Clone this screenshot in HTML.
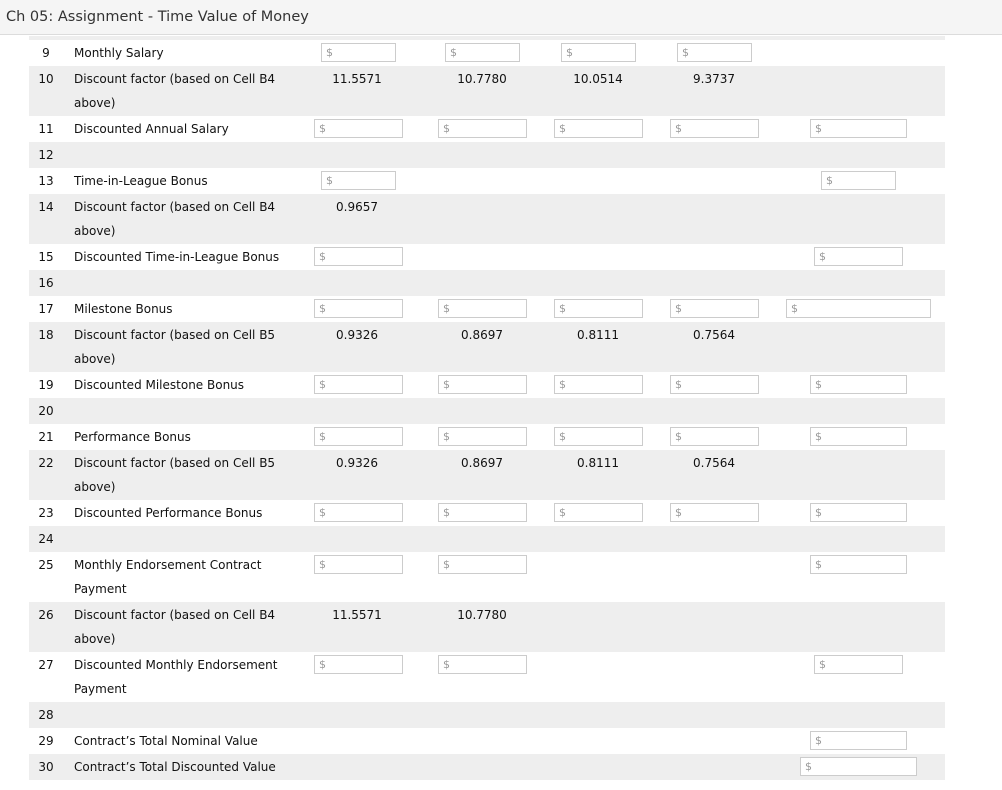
<!DOCTYPE html>
<html><head><meta charset="utf-8"><style>
body{margin:0;width:1002px;height:790px;background:#fff;position:relative;overflow:hidden;font-family:"DejaVu Sans","Liberation Sans",sans-serif;font-size:12px;color:#111}
.hd{position:absolute;left:0;top:0;width:1002px;height:35px;background:#f5f5f5;border-bottom:1px solid #dcdcdc;font-family:"DejaVu Sans",sans-serif;font-size:14.5px;color:#333;line-height:35px;padding-left:6px;box-sizing:border-box}
.g{position:absolute;left:29px;width:916px;background:#eeeeee}
.t{position:absolute;line-height:24px;white-space:nowrap;margin-top:1px}
.n{position:absolute;width:34px;left:29px;text-align:center;line-height:24px;margin-top:1px}
.v{position:absolute;width:100px;text-align:center;line-height:24px;margin-top:1px}
.i{position:absolute;height:19px;border:1px solid #ccc;box-sizing:border-box;background:#fff;font-size:11px;color:#999;line-height:17px;padding-left:4px}
</style></head><body>
<div class="hd">Ch 05: Assignment - Time Value of Money</div>
<div class="g" style="top:36px;height:4px"></div>
<div class="g" style="top:66px;height:50px"></div>
<div class="g" style="top:142px;height:26px"></div>
<div class="g" style="top:194px;height:50px"></div>
<div class="g" style="top:270px;height:26px"></div>
<div class="g" style="top:322px;height:50px"></div>
<div class="g" style="top:398px;height:26px"></div>
<div class="g" style="top:450px;height:50px"></div>
<div class="g" style="top:526px;height:26px"></div>
<div class="g" style="top:602px;height:50px"></div>
<div class="g" style="top:702px;height:26px"></div>
<div class="g" style="top:754px;height:26px"></div>

<div class="n" style="top:40px">9</div><div class="t" style="left:74px;top:40px">Monthly Salary</div>
<div class="i" style="left:321px;top:43px;width:75px">$</div><div class="i" style="left:445px;top:43px;width:75px">$</div><div class="i" style="left:561px;top:43px;width:75px">$</div><div class="i" style="left:677px;top:43px;width:75px">$</div>

<div class="n" style="top:66px">10</div><div class="t" style="left:74px;top:66px">Discount factor (based on Cell B4<br>above)</div>
<div class="v" style="left:307px;top:66px">11.5571</div><div class="v" style="left:432px;top:66px">10.7780</div><div class="v" style="left:548px;top:66px">10.0514</div><div class="v" style="left:664px;top:66px">9.3737</div>

<div class="n" style="top:116px">11</div><div class="t" style="left:74px;top:116px">Discounted Annual Salary</div>
<div class="i" style="left:314px;top:119px;width:89px">$</div><div class="i" style="left:438px;top:119px;width:89px">$</div><div class="i" style="left:554px;top:119px;width:89px">$</div><div class="i" style="left:670px;top:119px;width:89px">$</div><div class="i" style="left:810px;top:119px;width:97px">$</div>

<div class="n" style="top:142px">12</div>

<div class="n" style="top:168px">13</div><div class="t" style="left:74px;top:168px">Time-in-League Bonus</div>
<div class="i" style="left:321px;top:171px;width:75px">$</div><div class="i" style="left:821px;top:171px;width:75px">$</div>

<div class="n" style="top:194px">14</div><div class="t" style="left:74px;top:194px">Discount factor (based on Cell B4<br>above)</div>
<div class="v" style="left:307px;top:194px">0.9657</div>

<div class="n" style="top:244px">15</div><div class="t" style="left:74px;top:244px">Discounted Time-in-League Bonus</div>
<div class="i" style="left:314px;top:247px;width:89px">$</div><div class="i" style="left:814px;top:247px;width:89px">$</div>

<div class="n" style="top:270px">16</div>

<div class="n" style="top:296px">17</div><div class="t" style="left:74px;top:296px">Milestone Bonus</div>
<div class="i" style="left:314px;top:299px;width:89px">$</div><div class="i" style="left:438px;top:299px;width:89px">$</div><div class="i" style="left:554px;top:299px;width:89px">$</div><div class="i" style="left:670px;top:299px;width:89px">$</div><div class="i" style="left:786px;top:299px;width:145px">$</div>

<div class="n" style="top:322px">18</div><div class="t" style="left:74px;top:322px">Discount factor (based on Cell B5<br>above)</div>
<div class="v" style="left:307px;top:322px">0.9326</div><div class="v" style="left:432px;top:322px">0.8697</div><div class="v" style="left:548px;top:322px">0.8111</div><div class="v" style="left:664px;top:322px">0.7564</div>

<div class="n" style="top:372px">19</div><div class="t" style="left:74px;top:372px">Discounted Milestone Bonus</div>
<div class="i" style="left:314px;top:375px;width:89px">$</div><div class="i" style="left:438px;top:375px;width:89px">$</div><div class="i" style="left:554px;top:375px;width:89px">$</div><div class="i" style="left:670px;top:375px;width:89px">$</div><div class="i" style="left:810px;top:375px;width:97px">$</div>

<div class="n" style="top:398px">20</div>

<div class="n" style="top:424px">21</div><div class="t" style="left:74px;top:424px">Performance Bonus</div>
<div class="i" style="left:314px;top:427px;width:89px">$</div><div class="i" style="left:438px;top:427px;width:89px">$</div><div class="i" style="left:554px;top:427px;width:89px">$</div><div class="i" style="left:670px;top:427px;width:89px">$</div><div class="i" style="left:810px;top:427px;width:97px">$</div>

<div class="n" style="top:450px">22</div><div class="t" style="left:74px;top:450px">Discount factor (based on Cell B5<br>above)</div>
<div class="v" style="left:307px;top:450px">0.9326</div><div class="v" style="left:432px;top:450px">0.8697</div><div class="v" style="left:548px;top:450px">0.8111</div><div class="v" style="left:664px;top:450px">0.7564</div>

<div class="n" style="top:500px">23</div><div class="t" style="left:74px;top:500px">Discounted Performance Bonus</div>
<div class="i" style="left:314px;top:503px;width:89px">$</div><div class="i" style="left:438px;top:503px;width:89px">$</div><div class="i" style="left:554px;top:503px;width:89px">$</div><div class="i" style="left:670px;top:503px;width:89px">$</div><div class="i" style="left:810px;top:503px;width:97px">$</div>

<div class="n" style="top:526px">24</div>

<div class="n" style="top:552px">25</div><div class="t" style="left:74px;top:552px">Monthly Endorsement Contract<br>Payment</div>
<div class="i" style="left:314px;top:555px;width:89px">$</div><div class="i" style="left:438px;top:555px;width:89px">$</div><div class="i" style="left:810px;top:555px;width:97px">$</div>

<div class="n" style="top:602px">26</div><div class="t" style="left:74px;top:602px">Discount factor (based on Cell B4<br>above)</div>
<div class="v" style="left:307px;top:602px">11.5571</div><div class="v" style="left:432px;top:602px">10.7780</div>

<div class="n" style="top:652px">27</div><div class="t" style="left:74px;top:652px">Discounted Monthly Endorsement<br>Payment</div>
<div class="i" style="left:314px;top:655px;width:89px">$</div><div class="i" style="left:438px;top:655px;width:89px">$</div><div class="i" style="left:814px;top:655px;width:89px">$</div>

<div class="n" style="top:702px">28</div>

<div class="n" style="top:728px">29</div><div class="t" style="left:74px;top:728px">Contract’s Total Nominal Value</div>
<div class="i" style="left:810px;top:731px;width:97px">$</div>

<div class="n" style="top:754px">30</div><div class="t" style="left:74px;top:754px">Contract’s Total Discounted Value</div>
<div class="i" style="left:800px;top:757px;width:117px">$</div>
</body></html>
